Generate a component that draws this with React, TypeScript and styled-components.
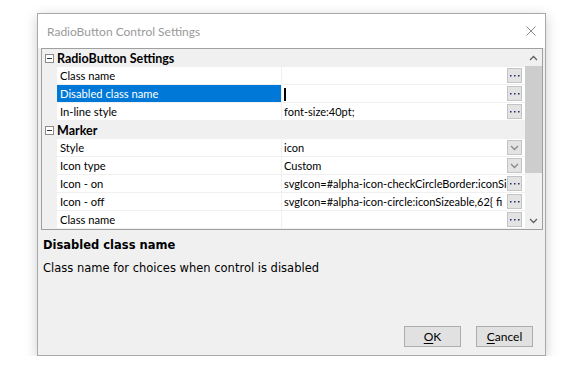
import React from 'react'
import styled, { createGlobalStyle } from 'styled-components'

const GlobalStyle = createGlobalStyle`
   body {
      margin: 0;
      background: #fff;
      font-family: Lato, "Noto Sans", sans-serif;
   }
`

const Page = styled.div`
   padding: 13px 0 0 37px;
`

const Dialog = styled.div`
   width: 509px;
   height: 343px;
   box-sizing: border-box;
   border: 1px solid #a9a9a9;
   background: #f0f0f0;
   box-shadow: 0 3px 12px rgba(0, 0, 0, 0.2);
   display: flex;
   flex-direction: column;
`

const TitleBar = styled.div`
   height: 34px;
   flex: none;
   background: #fff;
   display: flex;
   align-items: center;
   justify-content: space-between;
   padding: 0 9px 0 9px;
   font-size: 12px;
   color: #9a9a9a;
`

const Body = styled.div`
   flex: 1;
   display: flex;
   flex-direction: column;
   padding: 0 2px 8px 3px;
`

const Grid = styled.div`
   height: 182px;
   box-sizing: border-box;
   border: 1px solid #a0a0a0;
   display: flex;
   background: #f0f0f0;
`

const Rows = styled.div`
   flex: 1;
   display: flex;
   flex-direction: column;
   overflow: hidden;
`

const CategoryRow = styled.div`
   height: 18px;
   flex: none;
   display: flex;
   align-items: center;
   font-weight: 700;
   font-size: 12.5px;
   color: #000;
`

const Expander = styled.span`
   width: 15px;
   display: flex;
   justify-content: center;
   svg {
      display: block;
   }
`

const PropRow = styled.div`
   height: 18px;
   flex: none;
   display: flex;
   font-size: 11.2px;
`

const Gutter = styled.div`
   width: 15px;
   flex: none;
`

const LabelCell = styled.div<{ $selected?: boolean }>`
   width: 225px;
   flex: none;
   box-sizing: border-box;
   padding-left: 3px;
   display: flex;
   align-items: center;
   background: ${(p) => (p.$selected ? '#0078d7' : '#fff')};
   color: ${(p) => (p.$selected ? '#fff' : '#000')};
   border-bottom: 1px solid #f0f0f0;
   border-right: 1px solid #f0f0f0;
   white-space: nowrap;
`

const ValueCell = styled.div`
   flex: 1;
   min-width: 0;
   box-sizing: border-box;
   display: flex;
   align-items: center;
   background: #fff;
   border-bottom: 1px solid #f0f0f0;
   padding: 0 3px 0 2px;
   color: #000;
`

const ValueText = styled.span`
   flex: 1;
   min-width: 0;
   overflow: hidden;
   white-space: nowrap;
   font-size: 11px;
`

const Caret = styled.span`
   display: inline-block;
   width: 2px;
   height: 13px;
   background: #000;
   vertical-align: middle;
`

const CellButton = styled.span`
   width: 15px;
   height: 15px;
   flex: none;
   box-sizing: border-box;
   border: 1px solid #c4c4c4;
   background: #e3e3e3;
   display: flex;
   align-items: center;
   justify-content: center;
   svg {
      display: block;
   }
`

const Scrollbar = styled.div`
   width: 17px;
   flex: none;
   display: flex;
   flex-direction: column;
   align-items: center;
   background: #f0f0f0;
`

const ScrollArrow = styled.div`
   height: 17px;
   width: 17px;
   display: flex;
   align-items: center;
   justify-content: center;
`

const ScrollThumb = styled.div<{ $height: number }>`
   width: 17px;
   height: ${(p) => p.$height}px;
   background: #cdcdcd;
`

const Spacer = styled.div`
   flex: 1;
`

const Help = styled.div`
   padding: 8px 0 0 2px;
   font-family: "DejaVu Sans", Verdana, sans-serif;
   font-size: 11.5px;
   color: #000;
`

const HelpTitle = styled.div`
   font-weight: 700;
   line-height: 14px;
`

const HelpText = styled.div`
   margin-top: 9px;
   line-height: 14px;
`

const Footer = styled.div`
   margin-top: auto;
   display: flex;
   justify-content: flex-end;
   gap: 15px;
   padding-right: 10px;
`

const Button = styled.button`
   width: 57px;
   height: 21px;
   box-sizing: border-box;
   border: 1px solid #adadad;
   background: #e1e1e1;
   font-family: Lato, sans-serif;
   font-size: 12px;
   color: #000;
   padding: 0;
   u {
      text-decoration: underline;
      text-underline-offset: 2px;
   }
`

const CloseIcon = () => (
   <svg width="10" height="10" viewBox="0 0 10 10">
      <path d="M0.5 0.5L9.5 9.5M9.5 0.5L0.5 9.5" stroke="#8a8a8a" strokeWidth="1" />
   </svg>
)

const MinusBox = () => (
   <svg width="9" height="9" viewBox="0 0 9 9">
      <rect x="0.5" y="0.5" width="8" height="8" fill="#fff" stroke="#8c8c8c" />
      <path d="M2 4.5H7" stroke="#333" />
   </svg>
)

const Ellipsis = () => (
   <svg width="11" height="3" viewBox="0 0 11 3">
      <rect x="1" y="1" width="1.5" height="1.5" fill="#1b2a6b" />
      <rect x="5" y="1" width="1.5" height="1.5" fill="#1b2a6b" />
      <rect x="9" y="1" width="1.5" height="1.5" fill="#1b2a6b" />
   </svg>
)

const Chevron = ({ up, color = '#777' }: { up?: boolean; color?: string }) => (
   <svg width="9" height="6" viewBox="0 0 9 6">
      <path
         d={up ? 'M1 5L4.5 1.5L8 5' : 'M1 1L4.5 4.5L8 1'}
         stroke={color}
         strokeWidth="1.3"
         fill="none"
      />
   </svg>
)

type Prop = {
   label: string
   value?: React.ReactNode
   button?: 'dots' | 'drop'
   selected?: boolean
}

const Property = ({ label, value, button, selected }: Prop) => (
   <PropRow>
      <Gutter />
      <LabelCell $selected={selected}>{label}</LabelCell>
      <ValueCell>
         <ValueText>{value}</ValueText>
         {button && (
            <CellButton>{button === 'dots' ? <Ellipsis /> : <Chevron color="#888" />}</CellButton>
         )}
      </ValueCell>
   </PropRow>
)

const Category = ({ title }: { title: string }) => (
   <CategoryRow>
      <Expander>
         <MinusBox />
      </Expander>
      <span>{title}</span>
   </CategoryRow>
)

const App = () => {
   return (
      <Page>
         <GlobalStyle />
         <Dialog>
            <TitleBar>
               <span>RadioButton Control Settings</span>
               <CloseIcon />
            </TitleBar>
            <Body>
               <Grid>
                  <Rows>
                     <Category title="RadioButton Settings" />
                     <Property label="Class name" button="dots" />
                     <Property label="Disabled class name" value={<Caret />} button="dots" selected />
                     <Property label="In-line style" value="font-size:40pt;" button="dots" />
                     <Category title="Marker" />
                     <Property label="Style" value="icon" button="drop" />
                     <Property label="Icon type" value="Custom" button="drop" />
                     <Property
                        label="Icon - on"
                        value="svgIcon=#alpha-icon-checkCircleBorder:iconSi"
                        button="dots"
                     />
                     <Property
                        label="Icon - off"
                        value="svgIcon=#alpha-icon-circle:iconSizeable,62{ fi"
                        button="dots"
                     />
                     <Property label="Class name" button="dots" />
                  </Rows>
                  <Scrollbar>
                     <ScrollArrow>
                        <Chevron up color="#606060" />
                     </ScrollArrow>
                     <ScrollThumb $height={107} />
                     <Spacer />
                     <ScrollArrow>
                        <Chevron color="#606060" />
                     </ScrollArrow>
                  </Scrollbar>
               </Grid>
               <Help>
                  <HelpTitle>Disabled class name</HelpTitle>
                  <HelpText>Class name for choices when control is disabled</HelpText>
               </Help>
               <Footer>
                  <Button>
                     <u>O</u>K
                  </Button>
                  <Button>
                     <u>C</u>ancel
                  </Button>
               </Footer>
            </Body>
         </Dialog>
      </Page>
   )
}

export default App
